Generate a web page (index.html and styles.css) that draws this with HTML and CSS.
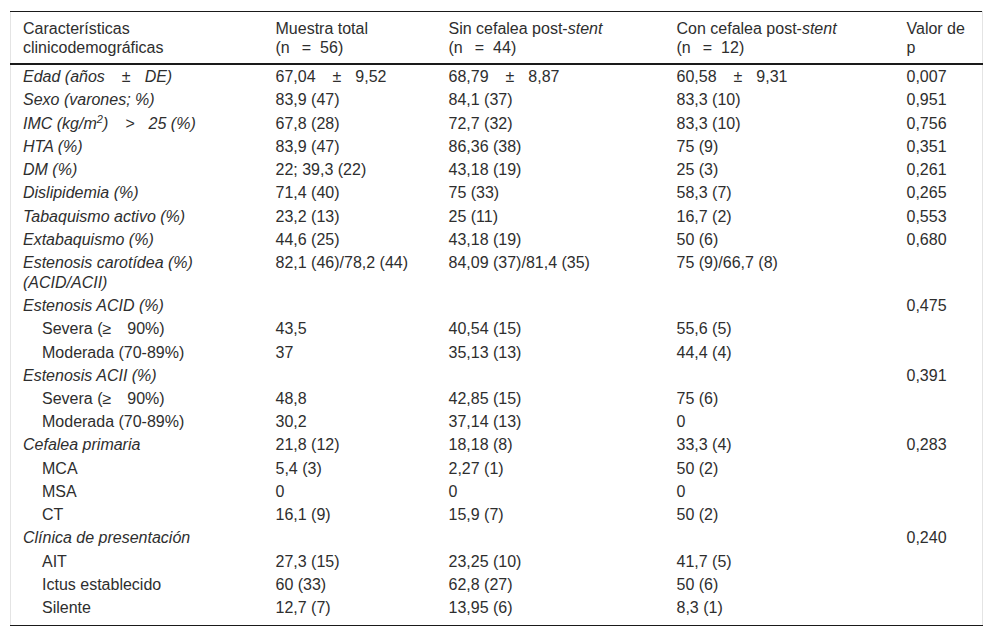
FILE: index.html
```html
<!DOCTYPE html>
<html lang="es">
<head>
<meta charset="utf-8">
<title>Tabla</title>
<link rel="stylesheet" href="styles.css">
</head>
<body>
<div class="wrap">
<table class="tbl">
<colgroup>
<col class="c1"><col class="c2"><col class="c3"><col class="c4"><col class="c5">
</colgroup>
<thead>
<tr>
<th>Características clinicodemográficas</th>
<th>Muestra total<br>(n<span class="g1"></span>=<span class="g2"></span>56)</th>
<th>Sin cefalea post-<i>stent</i><br>(n<span class="g1"></span>=<span class="g2"></span>44)</th>
<th>Con cefalea post-<i>stent</i><br>(n<span class="g1"></span>=<span class="g2"></span>12)</th>
<th>Valor de p</th>
</tr>
</thead>
<tbody>
<tr class="first"><td><i>Edad (años<span class="p1"></span>±<span class="p2"></span>DE)</i></td><td>67,04<span class="p1"></span>±<span class="p2"></span>9,52</td><td>68,79<span class="p1"></span>±<span class="p2"></span>8,87</td><td>60,58<span class="p1"></span>±<span class="p2"></span>9,31</td><td>0,007</td></tr>
<tr><td><i>Sexo (varones; %)</i></td><td>83,9 (47)</td><td>84,1 (37)</td><td>83,3 (10)</td><td>0,951</td></tr>
<tr><td><i>IMC (kg/m<sup>2</sup>)<span class="p1"></span>&gt;<span class="p2"></span>25 (%)</i></td><td>67,8 (28)</td><td>72,7 (32)</td><td>83,3 (10)</td><td>0,756</td></tr>
<tr><td><i>HTA (%)</i></td><td>83,9 (47)</td><td>86,36 (38)</td><td>75 (9)</td><td>0,351</td></tr>
<tr><td><i>DM (%)</i></td><td>22; 39,3 (22)</td><td>43,18 (19)</td><td>25 (3)</td><td>0,261</td></tr>
<tr><td><i>Dislipidemia (%)</i></td><td>71,4 (40)</td><td>75 (33)</td><td>58,3 (7)</td><td>0,265</td></tr>
<tr><td><i>Tabaquismo activo (%)</i></td><td>23,2 (13)</td><td>25 (11)</td><td>16,7 (2)</td><td>0,553</td></tr>
<tr><td><i>Extabaquismo (%)</i></td><td>44,6 (25)</td><td>43,18 (19)</td><td>50 (6)</td><td>0,680</td></tr>
<tr><td><i>Estenosis carotídea (%) (ACID/ACII)</i></td><td>82,1 (46)/78,2 (44)</td><td>84,09 (37)/81,4 (35)</td><td>75 (9)/66,7 (8)</td><td></td></tr>
<tr><td><i>Estenosis ACID (%)</i></td><td></td><td></td><td></td><td>0,475</td></tr>
<tr><td class="ind">Severa (≥<span class="g3"></span>90%)</td><td>43,5</td><td>40,54 (15)</td><td>55,6 (5)</td><td></td></tr>
<tr><td class="ind">Moderada (70-89%)</td><td>37</td><td>35,13 (13)</td><td>44,4 (4)</td><td></td></tr>
<tr><td><i>Estenosis ACII (%)</i></td><td></td><td></td><td></td><td>0,391</td></tr>
<tr><td class="ind">Severa (≥<span class="g3"></span>90%)</td><td>48,8</td><td>42,85 (15)</td><td>75 (6)</td><td></td></tr>
<tr><td class="ind">Moderada (70-89%)</td><td>30,2</td><td>37,14 (13)</td><td>0</td><td></td></tr>
<tr><td><i>Cefalea primaria</i></td><td>21,8 (12)</td><td>18,18 (8)</td><td>33,3 (4)</td><td>0,283</td></tr>
<tr><td class="ind">MCA</td><td>5,4 (3)</td><td>2,27 (1)</td><td>50 (2)</td><td></td></tr>
<tr><td class="ind">MSA</td><td>0</td><td>0</td><td>0</td><td></td></tr>
<tr><td class="ind">CT</td><td>16,1 (9)</td><td>15,9 (7)</td><td>50 (2)</td><td></td></tr>
<tr><td><i>Clínica de presentación</i></td><td></td><td></td><td></td><td>0,240</td></tr>
<tr><td class="ind">AIT</td><td>27,3 (15)</td><td>23,25 (10)</td><td>41,7 (5)</td><td></td></tr>
<tr><td class="ind">Ictus establecido</td><td>60 (33)</td><td>62,8 (27)</td><td>50 (6)</td><td></td></tr>
<tr class="last"><td class="ind">Silente</td><td>12,7 (7)</td><td>13,95 (6)</td><td>8,3 (1)</td><td></td></tr>
</tbody>
</table>
</div>
</body>
</html>
```

FILE: styles.css
```css
html, body {
  margin: 0;
  padding: 0;
  background: #fff;
}
body {
  font-family: "Liberation Sans", Arial, sans-serif;
  font-size: 16px;
  color: #2e2e2e;
}
.wrap {
  padding: 11px 10px 0 10px;
}
.tbl {
  width: 972px;
  border-collapse: collapse;
  table-layout: fixed;
  border-top: 1px solid #1a1a1a;
  border-bottom: 1px solid #1a1a1a;
  border-left: 1px solid #e4e4e4;
  border-right: 1px solid #e4e4e4;
}
.c1 { width: 253px; }
.c2 { width: 173px; }
.c3 { width: 228px; }
.c4 { width: 230px; }
.c5 { width: 88px; }
.tbl th {
  font-weight: normal;
  text-align: left;
  vertical-align: top;
  line-height: 19px;
  padding: 7px 12px 6px 12px;
  border-bottom: 2px solid #1a1a1a;
}
.tbl td {
  text-align: left;
  vertical-align: top;
  line-height: 20px;
  padding: 1.62px 12px 1.62px 12px;
}
.tbl tr.first td {
  padding-top: 2.2px;
}
.tbl tr.last td {
  padding-bottom: 7px;
}
.tbl td.ind {
  padding-left: 31px;
}
.tbl sup {
  font-size: 11px;
  line-height: 0;
  vertical-align: 6px;
}
.g1 {
  display: inline-block;
  width: 12px;
}
.g2 {
  display: inline-block;
  width: 9px;
}
.p1 {
  display: inline-block;
  width: 17px;
}
.p2 {
  display: inline-block;
  width: 14px;
}
.g3 {
  display: inline-block;
  width: 16px;
}
```
